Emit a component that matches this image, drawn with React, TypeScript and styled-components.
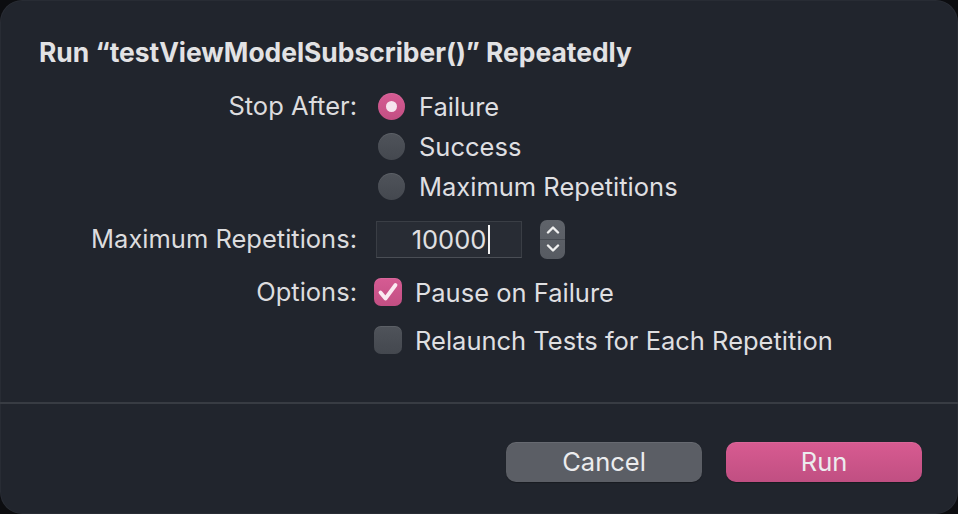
import React from "react";
import styled, { createGlobalStyle } from "styled-components";

const Global = createGlobalStyle`
  html, body { margin: 0; padding: 0; background: #0c0d10; }
  body { font-family: Inter, "Noto Sans", "Liberation Sans", sans-serif; -webkit-font-smoothing: antialiased; }
  * { box-sizing: border-box; }
`;

const Window = styled.div`
  width: 958px;
  height: 514px;
  background: #21252d;
  border-radius: 22px;
  box-shadow: inset 0 0 0 1px rgba(255, 255, 255, 0.035);
  display: flex;
  flex-direction: column;
  overflow: hidden;
  color: #dfdfe1;
`;

const Title = styled.h1`
  margin: 0;
  padding: 36px 0 0 39px;
  font-size: 26.4px;
  line-height: 32px;
  font-weight: 700;
  color: #e2e2e4;
`;

const Form = styled.div`
  display: grid;
  grid-template-columns: 318px auto;
  column-gap: 19px;
  row-gap: 13px;
  margin: 18px 0 0 39px;
  padding-bottom: 42px;
`;

const Label = styled.div`
  text-align: right;
  font-size: 25.5px;
  line-height: 40px;
  height: 40px;
  color: #dcdcde;
  white-space: nowrap;
`;

const Stack = styled.div<{ $gap: number }>`
  display: flex;
  flex-direction: column;
  gap: ${(p) => p.$gap}px;
`;

const Option = styled.label<{ $indent: number }>`
  display: flex;
  align-items: center;
  height: 40px;
  gap: ${(p) => p.$indent}px;
  font-size: 25.5px;
  color: #dfdfe1;
  white-space: nowrap;
`;

const RadioCircle = styled.span<{ $on?: boolean }>`
  width: 27px;
  height: 27px;
  margin-left: 2px;
  border-radius: 50%;
  display: flex;
  align-items: center;
  justify-content: center;
  background: ${(p) =>
    p.$on
      ? "linear-gradient(#d65b93, #c24f83)"
      : "linear-gradient(#4f535a, #44484f)"};
  box-shadow: inset 0 1px 0 rgba(255, 255, 255, 0.08);
  &::after {
    content: "";
    display: ${(p) => (p.$on ? "block" : "none")};
    width: 11px;
    height: 11px;
    border-radius: 50%;
    background: #f6e3ee;
  }
`;

const CheckBox = styled.span<{ $on?: boolean }>`
  width: 28px;
  height: 28px;
  margin-left: -2px;
  border-radius: 7px;
  display: flex;
  align-items: center;
  justify-content: center;
  background: ${(p) =>
    p.$on
      ? "linear-gradient(#d65b93, #c24f83)"
      : "linear-gradient(#4f535a, #44484f)"};
  box-shadow: inset 0 1px 0 rgba(255, 255, 255, 0.08);
`;

const FieldRow = styled.div`
  display: flex;
  align-items: center;
  height: 40px;
  gap: 18px;
`;

const NumberField = styled.div`
  width: 146px;
  height: 37px;
  background: #282c34;
  border: 1px solid #3a3e45;
  border-bottom-color: #4a4e55;
  display: flex;
  align-items: center;
  justify-content: center;
  font-size: 25.5px;
  color: #e0e0e2;
  padding-left: 4px;
`;

const Caret = styled.span`
  display: inline-block;
  width: 2px;
  height: 29px;
  background: #f2f2f2;
  margin-left: 2px;
`;

const Stepper = styled.div`
  width: 25px;
  height: 39px;
  border-radius: 7px;
  background: linear-gradient(#5f636a, #575b62);
  display: flex;
  flex-direction: column;
  align-items: center;
  justify-content: space-around;
  position: relative;
  &::after {
    content: "";
    position: absolute;
    left: 0;
    right: 0;
    top: 19px;
    height: 1px;
    background: #474b52;
  }
`;

const Divider = styled.hr`
  margin: 0;
  border: none;
  height: 2px;
  background: #383c43;
`;

const Footer = styled.div`
  display: flex;
  justify-content: flex-end;
  gap: 24px;
  padding: 38px 36px 0 0;
`;

const Button = styled.button<{ $primary?: boolean }>`
  width: 196px;
  height: 40px;
  border: none;
  border-radius: 10px;
  font-family: inherit;
  font-size: 25.5px;
  color: #ececee;
  background: ${(p) =>
    p.$primary
      ? "linear-gradient(#d85b91, #c04f82)"
      : "#5b5e65"};
  box-shadow: 0 1px 1px rgba(0, 0, 0, 0.25), inset 0 1px 0 rgba(255, 255, 255, 0.08);
  padding: 0 0 2px;
`;

const Chevron = ({ up }: { up?: boolean }) => (
  <svg width="14" height="9" viewBox="0 0 14 9">
    <path
      d={up ? "M2 7.5 L7 2.5 L12 7.5" : "M2 1.5 L7 6.5 L12 1.5"}
      fill="none"
      stroke="#f0f0f0"
      strokeWidth="2.4"
      strokeLinecap="round"
      strokeLinejoin="round"
    />
  </svg>
);

const Check = () => (
  <svg width="22" height="20" viewBox="0 0 22 20">
    <path
      d="M3.5 10.5 L8.5 16.5 L18.5 3"
      fill="none"
      stroke="#fbeaf2"
      strokeWidth="3.8"
      strokeLinecap="round"
      strokeLinejoin="round"
    />
  </svg>
);

export default function App() {
  return (
    <>
      <Global />
      <Window>
        <Title>Run “testViewModelSubscriber()” Repeatedly</Title>
        <Form>
          <Label>Stop After:</Label>
          <Stack $gap={0}>
            <Option $indent={14}>
              <RadioCircle $on />
              Failure
            </Option>
            <Option $indent={14}>
              <RadioCircle />
              Success
            </Option>
            <Option $indent={14}>
              <RadioCircle />
              Maximum Repetitions
            </Option>
          </Stack>

          <Label>Maximum Repetitions:</Label>
          <FieldRow>
            <NumberField>
              10000
              <Caret />
            </NumberField>
            <Stepper>
              <Chevron up />
              <Chevron />
            </Stepper>
          </FieldRow>

          <Label>Options:</Label>
          <Stack $gap={8}>
            <Option $indent={13}>
              <CheckBox $on>
                <Check />
              </CheckBox>
              Pause on Failure
            </Option>
            <Option $indent={13}>
              <CheckBox />
              Relaunch Tests for Each Repetition
            </Option>
          </Stack>
        </Form>
        <Divider />
        <Footer>
          <Button>Cancel</Button>
          <Button $primary>Run</Button>
        </Footer>
      </Window>
    </>
  );
}
